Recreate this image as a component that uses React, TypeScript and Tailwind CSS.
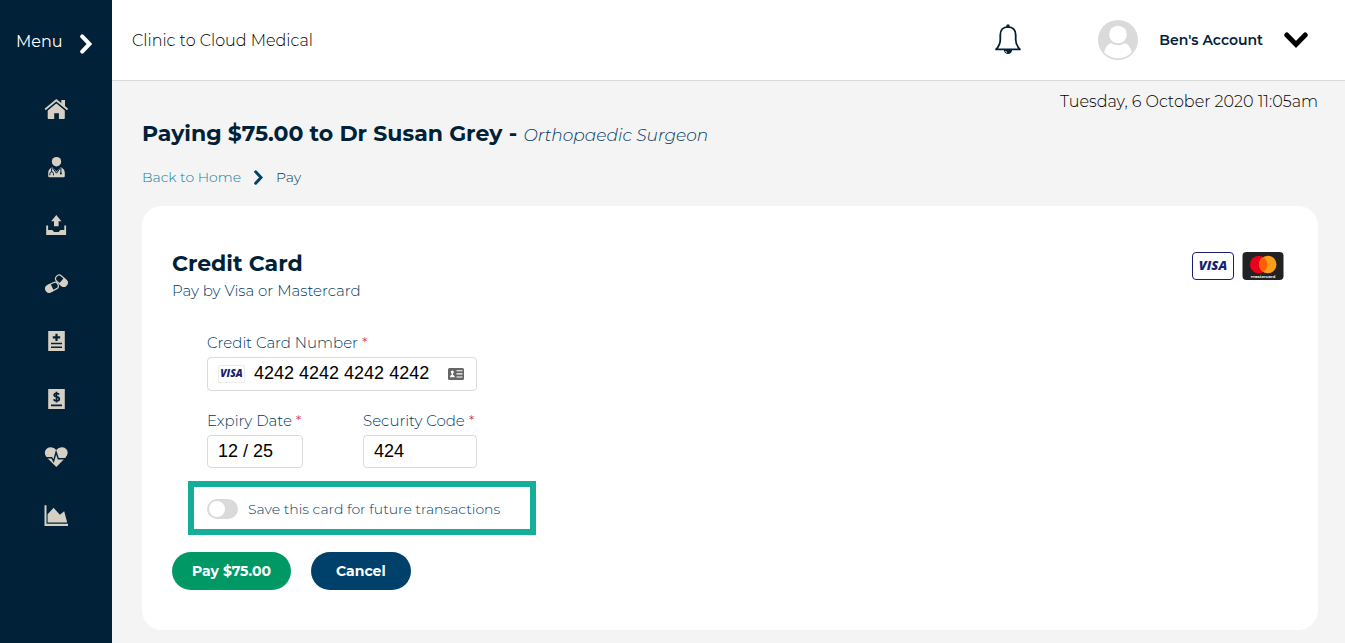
import { useState } from 'react'
import type { ReactNode } from 'react'

function Chevron({ className, direction = 'right', width = 4 }: { className?: string; direction?: 'right' | 'down'; width?: number }) {
  return direction === 'right' ? (
    <svg viewBox="0 0 12 20" className={className} fill="none" stroke="currentColor" strokeWidth={width} strokeLinecap="round" aria-hidden="true">
      <path d="M2.2 2.4 9.4 10l-7.2 7.6" />
    </svg>
  ) : (
    <svg viewBox="0 0 24 16" className={className} fill="none" stroke="currentColor" strokeWidth={width} strokeLinecap="round" aria-hidden="true">
      <path d="M2.8 3 12 12.4 21.2 3" />
    </svg>
  )
}

function Icon({ children }: { children: ReactNode }) {
  return (
    <svg viewBox="0 0 24 24" className="h-6 w-6" fill="currentColor" aria-hidden="true">
      {children}
    </svg>
  )
}

function HomeIcon() {
  return (
    <Icon>
      <path d="M3.7 13.3 12.300 5.900l8.500 7.400V21q0 .9-.9.900H14.900V16.200H10.200v5.700H4.600q-.9 0-.9-.9z" />
      <path d="M1.700 12.500 12.300 3.600l10.700 8.900" fill="none" stroke="#002137" strokeWidth="4" />
      <path d="M1.700 12 12.300 3.200l10.700 8.800" fill="none" stroke="currentColor" strokeWidth="1.800" strokeLinecap="round" />
      <path d="M17.300 3.100h3.700v7l-3.700-3z" />
    </Icon>
  )
}

function DoctorIcon() {
  return (
    <Icon>
      <ellipse cx="12.500" cy="6.700" rx="4.700" ry="4.800" />
      <path d="M8.300 12.300Q4.200 13.700 4.200 18v2.900q0 1.300 1.300 1.300h14q1.300 0 1.300-1.300V18q0-4.300-4.100-5.700l-4.200 4.300z" />
      <path d="m8.300 12.600 4.200 5.600 4-5.600M7.600 13.300v3.500M5.900 20.300v-1.600q.2-1.900 1.800-1.900t1.800 1.900v1.600M16.900 13v5" fill="none" stroke="#002137" strokeWidth="1" />
      <circle cx="16.900" cy="18.500" r="1" fill="#002137" />
    </Icon>
  )
}

function UploadIcon() {
  return (
    <Icon>
      <path d="M12.300 2 17.400 8.200h-2.800v5H10v-5H7.200z" />
      <path d="M2.200 12.500h1.900V17h4.200l1.700 2h4.700l1.700-2h3.900v-4.500h1.800V22H2.200z" />
    </Icon>
  )
}

function PillsIcon() {
  return (
    <Icon>
      <g transform="rotate(-27 8 17)">
        <rect x="1.800" y="12.800" width="13.200" height="7" rx="3.500" fill="none" stroke="currentColor" strokeWidth="1.200" />
        <path d="M8.500 12.300H5.200a4 4 0 0 0 0 8h3.300z" />
      </g>
      <g transform="rotate(42 17 10)">
        <rect x="10.500" y="6" width="13" height="7" rx="3.500" fill="none" stroke="currentColor" strokeWidth="1.200" />
        <path d="M17.200 5.500h3a4 4 0 0 1 0 8h-3z" />
      </g>
    </Icon>
  )
}

function RecordIcon() {
  return (
    <Icon>
      <path d="M4.200 2h16.600v20H4.200z" />
      <path d="M12.500 4.700v7.400M8.800 8.400h7.400" fill="none" stroke="#002137" strokeWidth="2.200" />
      <path d="M7 14.500h11M7 18.300h11" fill="none" stroke="#002137" strokeWidth="1.600" />
    </Icon>
  )
}

function BillIcon() {
  return (
    <Icon>
      <path d="M4.200 2h16.600v20H4.200z" />
      <path d="M15.200 7.500q-.8-1.200-2.700-1.200-2.300 0-2.300 1.700 0 1.500 2.400 1.900 2.700.4 2.700 2.100 0 1.900-2.700 1.900-2.300 0-3-1.500M12.500 4.700v10.800M7 18.300h11" fill="none" stroke="#002137" strokeWidth="1.700" />
    </Icon>
  )
}

function HeartIcon() {
  return (
    <Icon>
      <path d="M12.300 22 3 12.700Q.6 10.100.8 7.600 1.300 3 6.200 2.300q3.900-.3 6.100 2.800 2.200-3.100 6.100-2.800Q23.300 3 23.700 7.600q.1 2.500-2.300 5.100z" />
      <path d="M2 12.700h5.700l1.900 3.500 2.500-9 2.200 6.500h8.500" fill="none" stroke="#002137" strokeWidth="1.400" />
    </Icon>
  )
}

function ChartIcon() {
  return (
    <Icon>
      <path d="M.5 2.200h2v18.600h22V23H.5z" />
      <path d="M3.600 19.500v-8.300l6-6.400 6.300 7 4.300-3.600 3 11.300z" />
    </Icon>
  )
}

function BellIcon() {
  return (
    <svg viewBox="0 0 28 32" className="h-8 w-7" fill="none" stroke="currentColor" strokeWidth="1.800" strokeLinejoin="round" aria-hidden="true">
      <path d="M14 2.900c-5 0-7.700 3.300-7.700 8v4.500c0 4.400-1.600 7.200-4.300 9.900h24c-2.700-2.700-4.300-5.500-4.300-9.900v-4.500c0-4.700-2.700-8-7.700-8z" />
      <circle cx="14" cy="2" r="1.700" fill="currentColor" stroke="none" />
      <path d="M9.800 25.500a4.200 4.500 0 0 0 8.400 0z" fill="currentColor" stroke="none" />
      <path d="M11.500 27q.4 1.200 1.600 1.600" stroke="#fff" strokeWidth=".9" />
    </svg>
  )
}

function VisaLogo({ className, frame, size = 13 }: { className?: string; frame: string; size?: number }) {
  return (
    <svg viewBox="0 0 42 28" className={className} role="img" aria-label="Visa">
      <rect x=".5" y=".5" width="41" height="27" rx="3.500" fill="#fff" stroke={frame} />
      <text x="21" y={14 + size * 0.34} textAnchor="middle" fill="#1a1f71" fontFamily="Open Sans, sans-serif" fontSize={size} fontWeight="800" fontStyle="italic">
        VISA
      </text>
    </svg>
  )
}

function MastercardLogo() {
  return (
    <svg viewBox="0 0 42 28" className="h-7 w-[42px]" role="img" aria-label="Mastercard">
      <rect x=".5" width="41" height="28" rx="4" fill="#222" />
      <circle cx="16.700" cy="12.500" r="8.700" fill="#eb001b" />
      <circle cx="25.800" cy="12.500" r="8.700" fill="#f79e1b" />
      <path d="M21.250 5.100a8.700 8.700 0 0 1 0 14.800 8.700 8.700 0 0 1 0-14.800z" fill="#ff5f00" />
      <text x="21" y="25.600" textAnchor="middle" fill="#fff" fontFamily="Montserrat, sans-serif" fontSize="4.200" fontWeight="600">
        mastercard
      </text>
    </svg>
  )
}

function ContactCardIcon() {
  return (
    <svg viewBox="0 0 16 12" className="h-3 w-4 shrink-0" aria-hidden="true">
      <rect width="16" height="12" rx="1.500" fill="#666" />
      <circle cx="4.300" cy="4" r="1.500" fill="#fff" />
      <path d="M2 9.300V8.200q.5-1.300 2.300-1.300t2.300 1.300v1.100z" fill="#fff" />
      <path d="M3.600 5h1.400v2.500H3.600z" fill="#fff" />
      <path d="M8.500 2.800h6M8.500 5.900h6M8.500 9h6" stroke="#fff" strokeWidth="1.100" />
    </svg>
  )
}

const navItems = [
  { name: 'Home', icon: HomeIcon },
  { name: 'Practitioners', icon: DoctorIcon },
  { name: 'Uploads', icon: UploadIcon },
  { name: 'Medications', icon: PillsIcon },
  { name: 'Records', icon: RecordIcon },
  { name: 'Billing', icon: BillIcon },
  { name: 'Health', icon: HeartIcon },
  { name: 'Reports', icon: ChartIcon },
]

function FieldLabel({ htmlFor, children }: { htmlFor: string; children: ReactNode }) {
  return (
    <label htmlFor={htmlFor} className="block text-[15px] leading-5 font-light whitespace-nowrap text-[#003a63]">
      {children} <span className="text-[#e0294a]">*</span>
    </label>
  )
}

export default function App() {
  const [cardNumber, setCardNumber] = useState('4242 4242 4242 4242')
  const [expiry, setExpiry] = useState('12 / 25')
  const [code, setCode] = useState('424')
  const [saveCard, setSaveCard] = useState(false)

  return (
    <div className="flex min-h-screen bg-[#f4f4f4] font-[Montserrat,Inter,sans-serif] text-[#002137]">
      {/* Sidebar */}
      <aside className="w-28 shrink-0 bg-[#002137]">
        <button type="button" className="flex h-20 w-full items-center gap-[17px] pt-1 pl-4 text-base text-white">
          Menu
          <Chevron className="mt-1 h-5 w-3" />
        </button>
        <nav className="flex flex-col items-center text-[#d6d0c4]">
          {navItems.map(({ name, icon: NavIcon }) => (
            <a key={name} href="#" aria-label={name} className="flex h-[58px] w-full items-center justify-center">
              <NavIcon />
            </a>
          ))}
        </nav>
      </aside>

      <div className="flex min-w-0 flex-1 flex-col">
        {/* Header */}
        <header className="flex h-[81px] items-center border-b border-[#d9d9d9] bg-white pr-[37px] pl-5">
          <span className="flex-1 pt-0.5 text-base font-light text-black">Clinic to Cloud Medical</span>
          <button type="button" aria-label="Notifications" className="mr-[76px]">
            <BellIcon />
          </button>
          <button type="button" className="flex items-center gap-[21px] text-sm font-semibold">
            <svg viewBox="0 0 40 40" className="h-10 w-10" aria-hidden="true">
              <circle cx="20" cy="20" r="20" fill="#dadada" />
              <circle cx="20" cy="14.500" r="8.800" fill="#fff" />
              <path d="M6.300 32.500C7.300 26.800 10.300 23.600 13.300 23.200q6.700 4.300 13.400 0c3 .4 6 3.600 7 9.300Q28 38.300 20 38.300T6.300 32.500z" fill="#fff" />
            </svg>
            Ben's Account
            <Chevron direction="down" className="h-4 w-6 text-black" width={5} />
          </button>
        </header>

        {/* Payment */}
        <main className="flex-1 pr-[27px] pb-[13px] pl-[30px]">
          <p className="pt-[9px] text-right text-base leading-6 font-light text-black">Tuesday, 6 October 2020 11:05am</p>
          <h1 className="mt-1 text-[22px] leading-8 font-bold">
            Paying $75.00 to Dr Susan Grey - <em className="text-[17px] font-light text-[#003a63]">Orthopaedic Surgeon</em>
          </h1>
          <nav className="mt-[14px] flex items-center text-sm leading-6 font-light">
            <a href="#" className="text-[#0f7fa3]">
              Back to Home
            </a>
            <Chevron className="mx-[13px] h-[15px] w-[9px] text-[#00416b]" />
            <span className="text-[#003a63]">Pay</span>
          </nav>

          <section className="mt-[17px] rounded-[20px] bg-white px-[30px] pt-[42px] pb-10">
            <div className="flex justify-between">
              <div>
                <h2 className="text-[22px] leading-8 font-bold">Credit Card</h2>
                <p className="text-[15px] leading-[22px] font-light text-[#003a63]">Pay by Visa or Mastercard</p>
              </div>
              <div className="mt-1 mr-1 flex gap-2">
                <VisaLogo className="h-7 w-[42px]" frame="#1a1f71" />
                <MastercardLogo />
              </div>
            </div>

            <form onSubmit={(e) => e.preventDefault()}>
              <div className="mt-[31px] ml-[35px] w-[270px]">
                <FieldLabel htmlFor="card-number">Credit Card Number</FieldLabel>
                <div className="mt-1 flex h-[34px] items-center rounded border border-[#d9d9d9] pr-3 pl-[10px]">
                  <VisaLogo className="mr-[9px] h-[18px] w-[27px] shrink-0" frame="#d9d9d9" size={16} />
                  <input
                    id="card-number"
                    value={cardNumber}
                    onChange={(e) => setCardNumber(e.target.value)}
                    className="min-w-0 flex-1 bg-transparent pb-0.5 font-['Liberation_Sans',sans-serif] text-lg text-black outline-none"
                  />
                  <ContactCardIcon />
                </div>
              </div>

              <div className="mt-5 ml-[35px] flex gap-[60px]">
                <div className="w-24">
                  <FieldLabel htmlFor="expiry">Expiry Date</FieldLabel>
                  <input
                    id="expiry"
                    value={expiry}
                    onChange={(e) => setExpiry(e.target.value)}
                    className="mt-1 block h-[33px] w-full rounded border border-[#d9d9d9] px-[10px] font-['Liberation_Sans',sans-serif] text-lg text-black"
                  />
                </div>
                <div className="w-[114px]">
                  <FieldLabel htmlFor="code">Security Code</FieldLabel>
                  <input
                    id="code"
                    value={code}
                    onChange={(e) => setCode(e.target.value)}
                    className="mt-1 block h-[33px] w-full rounded border border-[#d9d9d9] px-[10px] font-['Liberation_Sans',sans-serif] text-lg text-black"
                  />
                </div>
              </div>

              <div className="mt-[13px] ml-4 flex h-[54px] w-[348px] items-center gap-[10px] border-6 border-[#15ae9b] pt-0.5 pl-[13px]">
                <input
                  id="save-card"
                  type="checkbox"
                  role="switch"
                  checked={saveCard}
                  onChange={(e) => setSaveCard(e.target.checked)}
                  className="flex h-5 w-[31px] shrink-0 appearance-none items-center rounded-full bg-[#dadada] px-0.5 before:h-4 before:w-4 before:rounded-full before:bg-white checked:justify-end checked:bg-[#009966]"
                />
                <label htmlFor="save-card" className="text-sm font-light whitespace-nowrap text-[#003a63]">
                  Save this card for future transactions
                </label>
              </div>

              <div className="mt-[17px] flex gap-5 text-sm font-bold text-white">
                <button type="submit" className="h-[38px] rounded-full bg-[#009966] px-5">
                  Pay $75.00
                </button>
                <button type="button" className="h-[38px] rounded-full bg-[#00416b] px-[25px]">
                  Cancel
                </button>
              </div>
            </form>
          </section>
        </main>
      </div>
    </div>
  )
}
